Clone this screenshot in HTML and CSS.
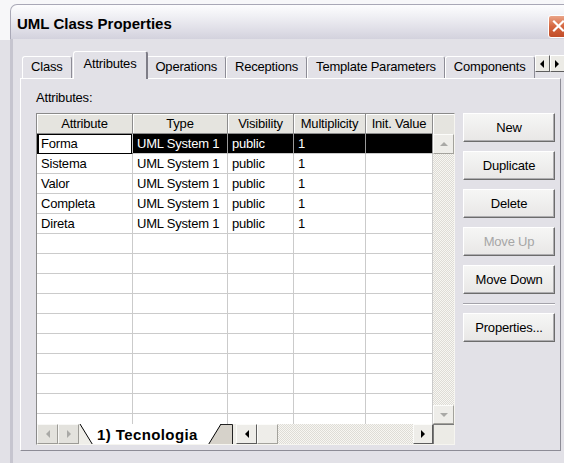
FILE: index.html
```html
<!DOCTYPE html>
<html>
<head>
<meta charset="utf-8">
<title>UML Class Properties</title>
<link rel="stylesheet" href="styles.css">
</head>
<body>
<div class="window">
  <div class="titlebar">
    <span class="title">UML Class Properties</span>
    <span class="close">
      <svg width="19" height="20" viewBox="0 0 19 20"><path d="M5 5.5L14 14.5M14 5.5L5 14.5" stroke="#fff" stroke-width="2.2" stroke-linecap="square"/></svg>
    </span>
  </div>
  <div class="dialog">
    <div class="tabs">
      <div class="tab">Class</div>
      <div class="tab active">Attributes</div>
      <div class="tab">Operations</div>
      <div class="tab">Receptions</div>
      <div class="tab">Template Parameters</div>
      <div class="tab">Components</div>
      <div class="tab-scroll">
        <span class="sbtn"><i class="tri tri-left"></i></span>
        <span class="sbtn"><i class="tri tri-right"></i></span>
      </div>
    </div>
    <div class="panel">
      <div class="label">Attributes:</div>
      <div class="content">
        <div class="grid">
          <div class="grid-head">
            <div class="hcell">Attribute</div>
            <div class="hcell">Type</div>
            <div class="hcell">Visibility</div>
            <div class="hcell">Multiplicity</div>
            <div class="hcell">Init. Value</div>
            <div class="hcell hcorner"></div>
          </div>
          <div class="grid-body">
            <div class="rows">
              <div class="cell edit">Forma</div><div class="cell sel">UML System 1</div><div class="cell sel">public</div><div class="cell sel">1</div><div class="cell sel"></div>
              <div class="cell">Sistema</div><div class="cell">UML System 1</div><div class="cell">public</div><div class="cell">1</div><div class="cell"></div>
              <div class="cell">Valor</div><div class="cell">UML System 1</div><div class="cell">public</div><div class="cell">1</div><div class="cell"></div>
              <div class="cell">Completa</div><div class="cell">UML System 1</div><div class="cell">public</div><div class="cell">1</div><div class="cell"></div>
              <div class="cell">Direta</div><div class="cell">UML System 1</div><div class="cell">public</div><div class="cell">1</div><div class="cell"></div>
              <div class="cell"></div><div class="cell"></div><div class="cell"></div><div class="cell"></div><div class="cell"></div>
              <div class="cell"></div><div class="cell"></div><div class="cell"></div><div class="cell"></div><div class="cell"></div>
              <div class="cell"></div><div class="cell"></div><div class="cell"></div><div class="cell"></div><div class="cell"></div>
              <div class="cell"></div><div class="cell"></div><div class="cell"></div><div class="cell"></div><div class="cell"></div>
              <div class="cell"></div><div class="cell"></div><div class="cell"></div><div class="cell"></div><div class="cell"></div>
              <div class="cell"></div><div class="cell"></div><div class="cell"></div><div class="cell"></div><div class="cell"></div>
              <div class="cell"></div><div class="cell"></div><div class="cell"></div><div class="cell"></div><div class="cell"></div>
              <div class="cell"></div><div class="cell"></div><div class="cell"></div><div class="cell"></div><div class="cell"></div>
              <div class="cell"></div><div class="cell"></div><div class="cell"></div><div class="cell"></div><div class="cell"></div>
              <div class="cell"></div><div class="cell"></div><div class="cell"></div><div class="cell"></div><div class="cell"></div>
            </div>
            <div class="vscroll">
              <span class="sb-btn sb-up"><i class="tri tri-up"></i></span>
              <span class="sb-track"></span>
              <span class="sb-btn sb-down"><i class="tri tri-down"></i></span>
            </div>
          </div>
          <div class="sheetbar">
            <span class="nav-btn"><i class="tri tri-left dim"></i></span>
            <span class="nav-btn"><i class="tri tri-right dim"></i></span>
            <svg class="sheettabs" width="157" height="20" viewBox="0 0 157 20">
              <polygon points="130,20 141.5,0.5 153.5,0.5 153.5,20" fill="#d6d2ca"/>
              <path d="M141.5 0.5H153.5V20" stroke="#222" fill="none"/>
              <polygon points="1,0 13,20 130,20 142,0" fill="#fff"/>
              <path d="M1 0L13.2 20M129.8 20L142 0" stroke="#000" fill="none"/>
              <text class="sheet-label" x="18" y="16">1) Tecnologia</text>
            </svg>
            <div class="hscroll">
              <span class="sb-btn hbtn"><i class="tri tri-left"></i></span>
              <span class="sb-btn hthumb"></span>
              <span class="sb-track"></span>
              <span class="sb-btn hbtn hbtn-r"><i class="tri tri-right"></i></span>
            </div>
            <span class="corner"></span>
          </div>
        </div>
        <div class="buttons">
          <div class="btn">New</div>
          <div class="btn">Duplicate</div>
          <div class="btn">Delete</div>
          <div class="btn disabled">Move Up</div>
          <div class="btn">Move Down</div>
          <div class="sep"></div>
          <div class="btn">Properties...</div>
        </div>
      </div>
    </div>
  </div>
</div>
</body>
</html>
```

FILE: styles.css
```css
html, body {
  margin: 0;
  height: 100%;
  overflow: hidden;
}

body {
  background: linear-gradient(#f7f7f9 0 40px, #e2e1e7 40px);
  font-family: "Liberation Sans", Arial, sans-serif;
  font-size: 13px;
  letter-spacing: -0.2px;
  color: #000;
}

/* ---- window frame ---- */
.window {
  margin: 4px 0 0 10px;
  width: 572px;
  height: 470px;
  display: flex;
  flex-direction: column;
}

.titlebar {
  flex: none;
  height: 35px;
  box-sizing: border-box;
  border: 1px solid #a9a8b6;
  border-bottom: 0;
  border-radius: 7px 7px 0 0;
  background: linear-gradient(#fdfdfe 0%, #f1f1f5 30%, #dedde6 75%, #d3d2dd 100%);
  display: flex;
  align-items: center;
  padding: 2px 0 0 6px;
}

.title {
  font-weight: bold;
  font-size: 15px;
  letter-spacing: 0;
}

.close {
  margin-left: auto;
  margin-right: 12px;
  margin-top: 6px;
  width: 21px;
  height: 23px;
  box-sizing: border-box;
  border: 1px solid #fff;
  border-radius: 3px;
  background: linear-gradient(#eaa487, #d5663f 50%, #c14c29);
  display: flex;
  align-items: center;
  justify-content: center;
}

.dialog {
  flex: 1;
  background: #e2e1e7;
  border-left: 3px solid #c6c5cf;
  padding: 12px 0 0 7px;
}

/* ---- tab strip ---- */
.tabs {
  display: flex;
  align-items: flex-end;
  height: 27px;
  width: 539px;
  margin-left: 2px;
  position: relative;
  z-index: 1;
}

.tab {
  height: 22px;
  box-sizing: border-box;
  padding: 1px 8px 0;
  border-top: 1px solid #fff;
  border-left: 1px solid #fff;
  border-right: 1px solid #8d8c96;
  border-radius: 3px 3px 0 0;
  line-height: 18px;
  white-space: nowrap;
  background: #e2e1e7;
}

.tab.active {
  height: 28px;
  margin: 0 -2px -1px 1px;
  padding: 3px 10px 0;
  border-right: 2px solid #7e7d87;
  position: relative;
  z-index: 1;
}

.tab-scroll {
  margin-left: auto;
  margin-bottom: 6px;
  display: flex;
}

.sbtn {
  width: 15px;
  height: 17px;
  box-sizing: border-box;
  border: 1px solid;
  border-color: #fff #5e5e5e #5e5e5e #fff;
  background: #ecebe6;
  display: flex;
  align-items: center;
  justify-content: center;
}

/* ---- small arrow glyphs ---- */
.tri {
  width: 0;
  height: 0;
  border: 4px solid transparent;
}
.tri-left { border-right-color: #000; border-left-width: 0; }
.tri-right { border-left-color: #000; border-right-width: 0; }
.tri-up { border-bottom-color: #a9a9a6; border-top-width: 0; }
.tri-down { border-top-color: #a9a9a6; border-bottom-width: 0; }
.tri-left.dim { border-right-color: #a9a9a6; }
.tri-right.dim { border-left-color: #a9a9a6; }

/* ---- page panel ---- */
.panel {
  width: 541px;
  height: 373px;
  box-sizing: border-box;
  border: 1px solid;
  border-color: #fff #8d8c96 #8d8c96 #fff;
  padding: 11px 0 0 15px;
}

.label {
  line-height: 15px;
  margin-bottom: 8px;
}

.content {
  display: flex;
  align-items: flex-start;
  gap: 8px;
}

/* ---- attribute grid ---- */
.grid {
  width: 419px;
  height: 332px;
  box-sizing: border-box;
  border: 1px solid;
  border-color: #8a8a8a #f6f5f0 #f6f5f0 #8a8a8a;
  background: #fff;
  display: flex;
  flex-direction: column;
}

.grid-head {
  flex: none;
  display: grid;
  grid-template-columns: 96px 95px 66px 72px 67px 21px;
  height: 20px;
}

.hcell {
  box-sizing: border-box;
  background: #e5e4df;
  border-right: 1px solid #8c8c8c;
  border-bottom: 1px solid #8c8c8c;
  box-shadow: inset 1px 1px #fff;
  text-align: center;
  line-height: 19px;
  white-space: nowrap;
  overflow: hidden;
}

.hcorner {
  border-right: 0;
  border-bottom: 0;
}

.grid-body {
  flex: none;
  display: flex;
  height: 290px;
}

.rows {
  width: 396px;
  display: grid;
  grid-template-columns: 96px 95px 66px 72px 67px;
  grid-auto-rows: 20px;
  align-content: start;
  overflow: hidden;
}

.cell {
  box-sizing: border-box;
  border-right: 1px solid #cbcbcb;
  border-bottom: 1px solid #cbcbcb;
  padding-left: 4px;
  line-height: 19px;
  white-space: nowrap;
  overflow: hidden;
}

.cell.sel {
  background: #000;
  color: #fff;
  border-right-color: #9a9a9a;
}

.cell.edit {
  background: #fff;
  box-shadow: inset 2px 1px 0 #000, inset -1px 0 0 #000;
  border-bottom-color: #000;
}

.vscroll {
  width: 21px;
  display: flex;
  flex-direction: column;
}

.sb-track {
  flex: 1;
  background: repeating-conic-gradient(#f7f6f2 0 25%, #dedcd6 0 50%) 0 0 / 2px 2px;
}

.sb-btn {
  box-sizing: border-box;
  border: 1px solid;
  border-color: #fcfcfa #a3a29c #a3a29c #fcfcfa;
  background: #eeede9;
  display: flex;
  align-items: center;
  justify-content: center;
}

.sb-up { height: 20px; }
.sb-down { height: 19px; }

/* ---- sheet tabs + horizontal scroller ---- */
.sheetbar {
  flex: none;
  display: flex;
  height: 20px;
  background: #efeee9;
}

.nav-btn {
  width: 21px;
  box-sizing: border-box;
  border: 1px solid;
  border-color: #f8f8f6 #9c9b96 #9c9b96 #f8f8f6;
  background: #e3e2dd;
  display: flex;
  align-items: center;
  justify-content: center;
}

.sheettabs {
  display: block;
  flex: none;
}

.sheet-label {
  font-family: "Liberation Sans", Arial, sans-serif;
  font-size: 15px;
  font-weight: bold;
  letter-spacing: 0.4px;
  fill: #000;
}

.hscroll {
  width: 197px;
  display: flex;
}

.hbtn {
  width: 21px;
  border-right-color: #5c5c5c;
  border-bottom-color: #5c5c5c;
}

.hbtn-r { width: 20px; }

.hthumb { width: 21px; }

.corner {
  width: 21px;
  box-sizing: border-box;
  border-top: 1px solid #7a7a7a;
  border-left: 1px solid #7a7a7a;
  background: #ecebe6;
}

/* ---- command buttons ---- */
.buttons {
  width: 92px;
  display: flex;
  flex-direction: column;
  gap: 9px;
}

.btn {
  height: 29px;
  box-sizing: border-box;
  border: 1px solid;
  border-color: #fff #6c6c6c #6c6c6c #fff;
  box-shadow: inset -1px -1px #aeadb0;
  background: linear-gradient(#f6f6f5, #e8e7e6);
  display: flex;
  align-items: center;
  justify-content: center;
  white-space: nowrap;
}

.btn.disabled {
  color: #a6a6a6;
}

.sep {
  border-top: 1px solid #a4a3aa;
  border-bottom: 1px solid #fff;
  margin-bottom: -1px;
}
```
